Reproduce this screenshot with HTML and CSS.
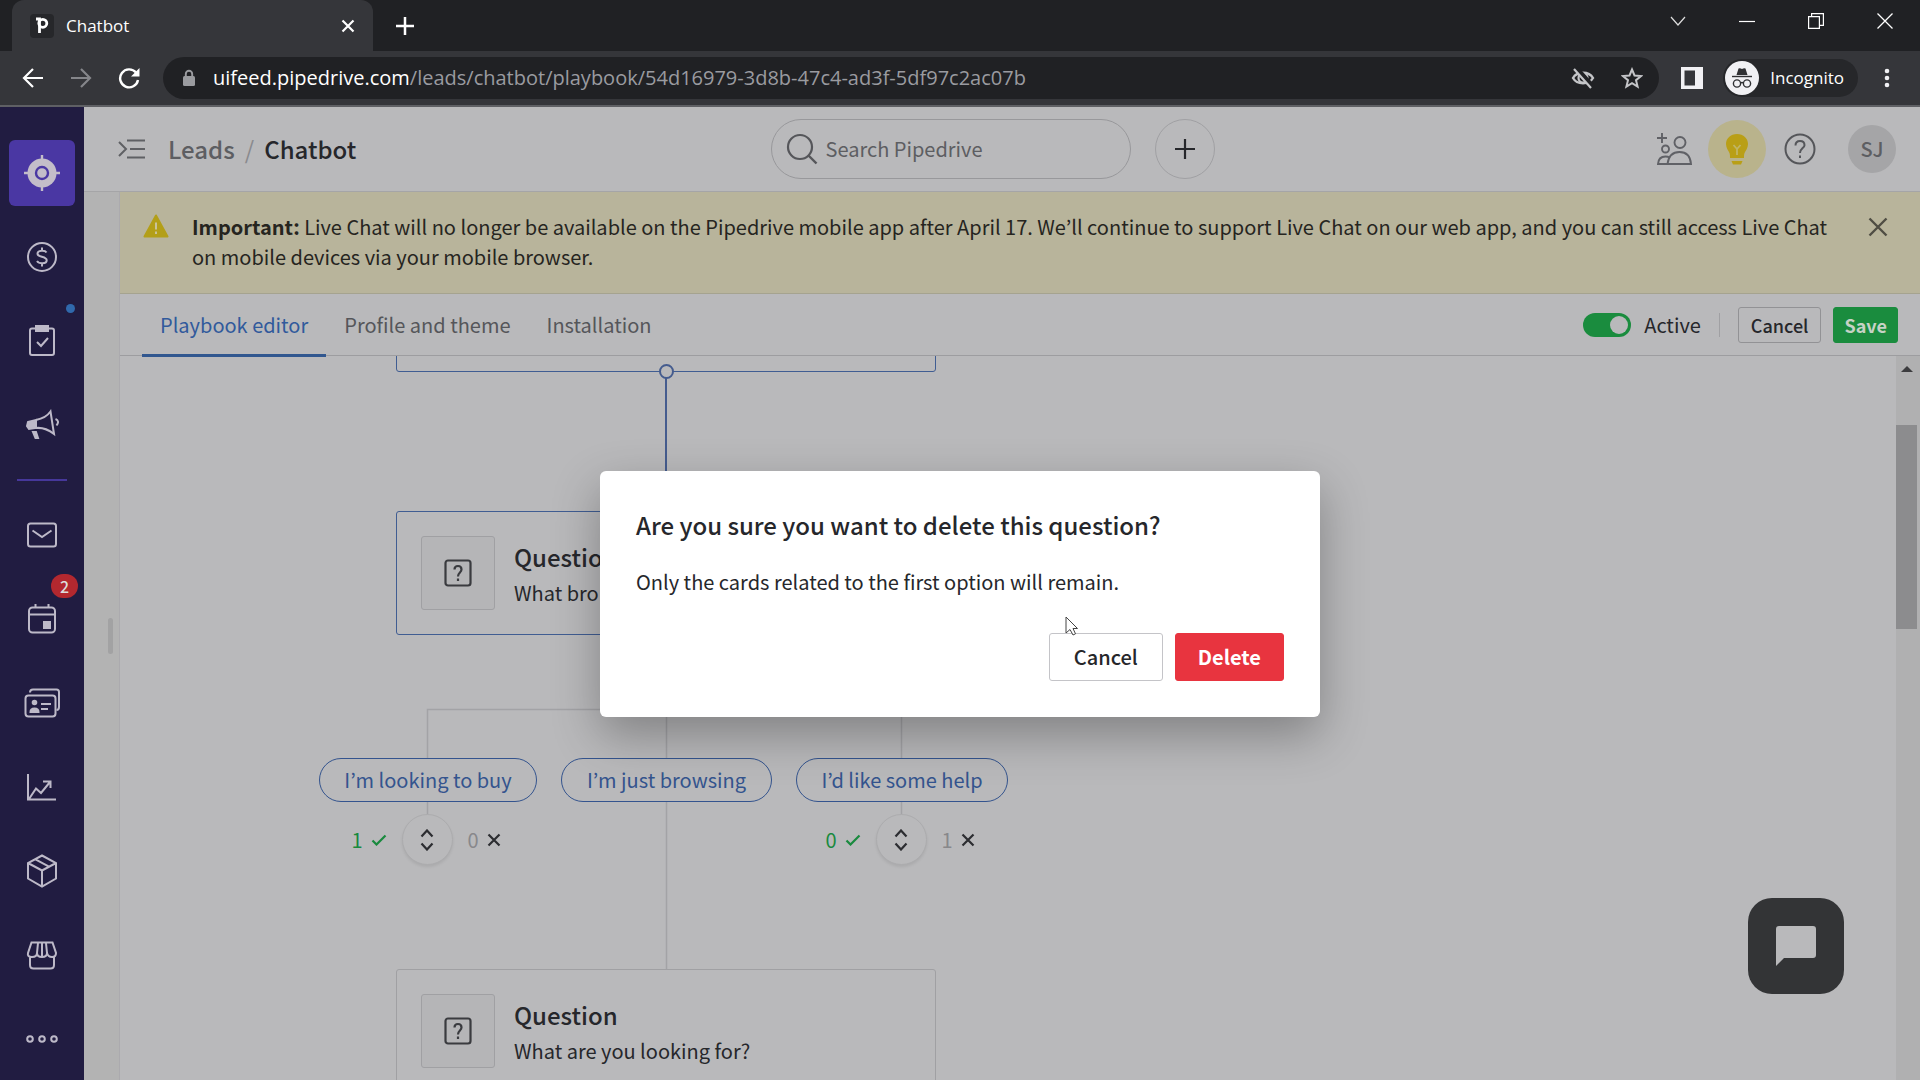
FILE: index.html
```html
<!DOCTYPE html>
<html lang="en">
<head>
<meta charset="utf-8">
<title>Chatbot</title>
<link rel="stylesheet" href="styles.css">
</head>
<body>
<header class="browser">
  <div class="tabstrip">
    <div class="browser-tab">
      <svg class="favicon" viewBox="0 0 24 24" width="24" height="24"><rect width="24" height="24" rx="4" fill="#26272a"/><path d="M6 5H9.500V19" fill="none" stroke="#fff" stroke-width="2.800"/><circle cx="12.800" cy="9.300" r="4" fill="none" stroke="#fff" stroke-width="2.800"/></svg>
      <span class="tab-title">Chatbot</span>
      <button class="bare" aria-label="Close tab"><svg viewBox="0 0 14 14" width="14" height="14"><path d="M1.500 1.500 12.500 12.500M12.500 1.500 1.500 12.500" stroke="#fff" stroke-width="2.200"/></svg></button>
    </div>
    <button class="bare new-tab" aria-label="New tab"><svg viewBox="0 0 18 18" width="18" height="18"><path d="M9 0V18M0 9H18" stroke="#fff" stroke-width="2.500"/></svg></button>
    <div class="window-controls">
      <button class="bare" aria-label="Search tabs"><svg viewBox="0 0 16 10" width="16" height="10"><path d="M1 1 8 9 15 1" fill="none" stroke="#ddd" stroke-width="1.200"/></svg></button>
      <button class="bare" aria-label="Minimise"><svg viewBox="0 0 16 16" width="16" height="16"><path d="M0 8.500H16" stroke="#fff" stroke-width="1.200"/></svg></button>
      <button class="bare" aria-label="Restore"><svg viewBox="0 0 16 16" width="16" height="16"><path d="M.600 3.600H11.400V15.400H.600ZM3.600 3.500V.600H15.400V12.400H11.500" fill="none" stroke="#fff" stroke-width="1.200"/></svg></button>
      <button class="bare" aria-label="Close"><svg viewBox="0 0 16 16" width="16" height="16"><path d="M.500.500 15.500 15.500M15.500.500.500 15.500" stroke="#fff" stroke-width="1.300"/></svg></button>
    </div>
  </div>
  <div class="toolbar">
    <button class="bare" aria-label="Back"><svg viewBox="0 0 22 22" width="22" height="22"><path d="M21 11H2M11 2 2 11 11 20" fill="none" stroke="#fff" stroke-width="2.200"/></svg></button>
    <button class="bare" aria-label="Forward"><svg viewBox="0 0 22 22" width="22" height="22"><path d="M1 11H20M11 2 20 11 11 20" fill="none" stroke="#85868a" stroke-width="2.200"/></svg></button>
    <button class="bare" aria-label="Reload"><svg viewBox="0 0 22 22" width="22" height="22"><path d="M18 5.500A9 9 0 1 0 20 13" fill="none" stroke="#fff" stroke-width="2.400"/><path d="M21.500 1V9.500H13Z" fill="#fff"/></svg></button>
    <div class="omnibox">
      <svg viewBox="0 0 14 18" width="14" height="18"><rect x="1" y="7" width="12" height="10" rx="1.500" fill="#9a9b9f"/><path d="M3.800 8V5A3.200 3.200 0 0 1 10.200 5V8" fill="none" stroke="#9a9b9f" stroke-width="1.900"/></svg>
      <div class="url"><span class="domain">uifeed.pipedrive.com</span>/leads/chatbot/playbook/54d16979-3d8b-47c4-ad3f-5df97c2ac07b</div>
      <button class="bare" aria-label="Third-party cookies blocked"><svg viewBox="0 0 24 22" width="24" height="22"><path d="M2 11C6 4 18 4 22 11 18 18 6 18 2 11Z" fill="none" stroke="#c4c5c8" stroke-width="2.400"/><circle cx="12" cy="11" r="4.500" fill="none" stroke="#c4c5c8" stroke-width="2.200"/><path d="M5 1 22 20" stroke="#202124" stroke-width="5"/><path d="M3 2 20 21" stroke="#c4c5c8" stroke-width="2.200"/></svg></button>
      <button class="bare" aria-label="Bookmark"><svg viewBox="0 0 22 22" width="22" height="22"><path d="M11 2.500 13.500 8.500 20 9 15 13.200 16.600 19.600 11 16.200 5.400 19.600 7 13.200 2 9 8.500 8.500Z" fill="none" stroke="#c4c5c8" stroke-width="2"/></svg></button>
    </div>
    <button class="bare side-panel" aria-label="Side panel"><svg viewBox="0 0 22 22" width="22" height="22"><path d="M0 0H22V22H0ZM3.500 3.500V18.500H14V3.500Z" fill="#f1f1f4" fill-rule="evenodd"/></svg></button>
    <button class="incognito"><svg viewBox="0 0 34 34" width="34" height="34"><circle cx="17" cy="17" r="17" fill="#f1f1f4"/><path d="M7 15.500H27" stroke="#303134" stroke-width="1.400"/><path d="M11.500 14 13.500 7.500Q15 6.800 17 8 19 6.800 20.500 7.500L22.500 14Z" fill="#303134"/><circle cx="12" cy="22.500" r="3.600" fill="none" stroke="#303134" stroke-width="1.400"/><circle cx="22" cy="22.500" r="3.600" fill="none" stroke="#303134" stroke-width="1.400"/><path d="M15.500 22Q17 21 18.500 22" fill="none" stroke="#303134" stroke-width="1.400"/></svg><span>Incognito</span></button>
    <button class="bare" aria-label="Browser menu"><svg viewBox="0 0 6 20" width="6" height="20"><circle cx="3" cy="3" r="2.300" fill="#f1f1f4"/><circle cx="3" cy="10" r="2.300" fill="#f1f1f4"/><circle cx="3" cy="17" r="2.300" fill="#f1f1f4"/></svg></button>
  </div>
</header>

<div class="app">
  <nav class="sidebar" aria-label="Main">
    <a class="nav-item active" href="#leads" aria-label="Leads"><svg viewBox="0 0 36 36" width="36" height="36"><circle cx="18" cy="18" r="14.500" fill="#c3bdc9"/><path d="M18 0V36M0 18H36" stroke="#c3bdc9" stroke-width="2.400"/><circle cx="18" cy="18" r="6" fill="#c3bdc9" stroke="#4a37a3" stroke-width="2.400"/></svg></a>
    <a class="nav-item" href="#deals" aria-label="Deals"><svg viewBox="0 0 32 32" width="32" height="32" class="line"><circle cx="16" cy="16" r="14"/><path d="M20.500 11.500C19 9 11.500 9 11.500 12.800 11.500 16.500 20.700 15 20.700 19.300 20.700 23.200 13 23.200 11 20M16 6.500V10M16 22V25.500"/></svg></a>
    <a class="nav-item" href="#projects" aria-label="Projects"><svg viewBox="0 0 32 32" width="32" height="32" class="line"><rect x="4" y="3.500" width="24" height="26.500" rx="2"/><path class="solid" d="M10 1H22V6H10Z"/><path d="M11 17 15 21 22 13"/></svg><span class="dot"></span></a>
    <a class="nav-item" href="#campaigns" aria-label="Campaigns"><svg viewBox="0 0 34 32" width="34" height="32" class="line"><path class="solid" d="M3 13 11 11V19L4 20 2 17Z"/><path d="M11 11Q21 9 25.500 2.500L29 25Q20 18 11 19M30.500 10Q35 12 31.500 16.500"/><path class="solid" d="M8 23H11L13 29H10.500Z"/></svg></a>
    <div class="nav-divider"></div>
    <a class="nav-item" href="#mail" aria-label="Mail"><svg viewBox="0 0 32 32" width="32" height="32" class="line"><rect x="2" y="4.500" width="28" height="23" rx="2.500"/><path d="M6.500 11.500 16 18 25.500 11.500"/></svg></a>
    <a class="nav-item" href="#activities" aria-label="Activities"><svg viewBox="0 0 32 32" width="32" height="32" class="line"><rect x="3" y="4.500" width="26" height="25" rx="3.500"/><path d="M3 11.500H29M9.500 1V4.500M22.500 1V4.500"/><path class="solid" d="M18 19H24V25H18Z"/></svg><span class="badge">2</span></a>
    <a class="nav-item" href="#contacts" aria-label="Contacts"><svg viewBox="0 0 38 32" width="38" height="32" class="line"><rect x="2.500" y="8.500" width="30" height="21" rx="3"/><path d="M7 5.500Q7 2.500 10 2.500H33.500Q36 2.500 36 5V20Q36 23 33.500 23M18 17H28M18 22H25"/><circle class="solid" cx="11.500" cy="15.500" r="1.800"/><path class="solid" d="M7.500 25Q7.500 21.500 11.500 21.500T15.500 25Z"/></svg></a>
    <a class="nav-item" href="#insights" aria-label="Insights"><svg viewBox="0 0 32 32" width="32" height="32" class="line"><path d="M2 3V28.500H30M3 28 10 17.500 15 22 24 11M17 10.500H24.500V17"/></svg></a>
    <a class="nav-item" href="#products" aria-label="Products"><svg viewBox="0 0 32 34" width="32" height="34" class="line"><path d="M16 1.500 30 9V24.500L16 32.500 2 24.500V9ZM2 9 16 16.500 30 9M16 16.500V32.500M9 5.200 23 12.700"/></svg></a>
    <a class="nav-item" href="#marketplace" aria-label="Marketplace"><svg viewBox="0 0 32 32" width="32" height="32" class="line"><path d="M5.500 3.500H26.500L30 14Q30 18 26 18T21 14Q21 18 16 18T11 14Q11 18 6 18T2 14ZM11 14 12 4M21 14 20 4M16 4V18M4 18V26Q4 29.500 7.500 29.500H24.500Q28 29.500 28 26V18"/></svg></a>
    <a class="nav-item" href="#more" aria-label="More"><svg viewBox="0 0 32 10" width="32" height="10" class="line"><circle cx="4" cy="5" r="2.800"/><circle cx="16" cy="5" r="2.800"/><circle cx="28" cy="5" r="2.800"/></svg></a>
  </nav>

  <div class="workspace">
    <div class="app-header">
      <div class="crumbs">
        <button class="bare" aria-label="Expand menu"><svg viewBox="0 0 28 20" width="28" height="20"><path d="M1 3 8 10 1 17M9 1.500H27M12 10H27M9 18.500H27" fill="none" stroke="#5f6064" stroke-width="2"/></svg></button>
        <a class="crumb" href="#leads">Leads</a><span class="slash">/</span><h1 class="crumb-current">Chatbot</h1>
      </div>
      <div class="search-group">
        <label class="search"><svg viewBox="0 0 32 32" width="32" height="32"><circle cx="14" cy="14" r="12" fill="none" stroke="#55565a" stroke-width="2.200"/><path d="M22.500 22.500 30.500 30.500" stroke="#55565a" stroke-width="2.400"/></svg><input type="text" placeholder="Search Pipedrive" aria-label="Search Pipedrive"></label>
        <button class="add" aria-label="Quick add"><svg viewBox="0 0 20 20" width="20" height="20"><path d="M10 0V20M0 10H20" stroke="#26272b" stroke-width="2.200"/></svg></button>
      </div>
      <div class="header-actions">
        <button class="bare" aria-label="Invite users"><svg viewBox="0 0 36 34" width="36" height="34" fill="none" stroke="#606166" stroke-width="1.900"><path d="M6 1V11M1 6H11"/><circle cx="24" cy="10.500" r="5.500"/><circle cx="9.500" cy="17" r="3.500"/><path d="M11.500 32H35Q34 20 23.500 20T11.500 32ZM11.500 32H2Q2.500 24.500 9.500 24.500 12 24.500 13.500 25.500"/></svg></button>
        <button class="tips" aria-label="Sales assistant"><svg viewBox="0 0 24 32" width="24" height="32"><path d="M12 1C5.500 1 1 5.500 1 11 1 15 3.500 18 4.500 20 5 21.500 5 23 5 25H19C19 23 19 21.500 19.500 20 20.500 18 23 15 23 11 23 5.500 18.500 1 12 1ZM6.500 28H17.500L16 31.500H8Z" fill="#b99f16"/><path d="M8.500 12 12 16 15.500 12M12 16V22" fill="none" stroke="#c0b565" stroke-width="1.800"/></svg></button>
        <button class="bare" aria-label="Help"><svg viewBox="0 0 32 32" width="32" height="32" fill="none" stroke="#55565a" stroke-width="2"><circle cx="16" cy="16" r="14.500"/><path d="M11.500 12.500Q11.500 8 16 8T20.500 12.200C20.500 15 16 15.500 16 20M16 22.500V25"/></svg></button>
        <button class="avatar">SJ</button>
      </div>
    </div>

    <div class="panel-row">
      <div class="gutter"><span class="grip"></span></div>
      <main class="panel">
        <div class="notice">
          <svg viewBox="0 0 26 24" width="26" height="24"><path d="M13 1.500 24.500 22.500H1.500Z" fill="#b39f18" stroke="#b39f18" stroke-width="2" stroke-linejoin="round"/><path d="M13 8.500V15.500M13 17.500V20" stroke="#c9c29a" stroke-width="2"/></svg>
          <p><strong>Important:</strong> Live Chat will no longer be available on the Pipedrive mobile app after April 17. We’ll continue to support Live Chat on our web app, and you can still access Live Chat on mobile devices via your mobile browser.</p>
          <button class="bare" aria-label="Dismiss"><svg viewBox="0 0 20 20" width="20" height="20"><path d="M1.500 1.500 18.500 18.500M18.500 1.500 1.500 18.500" stroke="#4f4d43" stroke-width="2.400"/></svg></button>
        </div>
        <div class="editor-bar">
          <div class="tabs">
            <a class="tab selected" href="#editor">Playbook editor</a>
            <a class="tab" href="#profile">Profile and theme</a>
            <a class="tab" href="#install">Installation</a>
          </div>
          <div class="editor-actions">
            <label class="toggle"><input type="checkbox" checked><span>Active</span></label>
            <span class="rule"></span>
            <button class="btn small">Cancel</button>
            <button class="btn small save">Save</button>
          </div>
        </div>
        <div class="canvas-row">
          <div class="canvas">
            <svg class="wires" viewBox="0 0 900 723" width="900" height="723" fill="none"><path d="M546 15V155" stroke="#455c8e" stroke-width="2"/><path d="M546.500 279V613M307.500 402V353.500H781.500V402M307.500 446V461M781.500 446V461" stroke="#a3a3a6" stroke-width="1.500"/></svg>
            <div class="node node-start"></div>
            <span class="port"></span>
            <article class="node node-first"><div class="node-icon"><svg viewBox="0 0 28 28" width="28" height="28" fill="none" stroke="#3a3b3f" stroke-width="2.200"><rect x="1.500" y="1.500" width="25" height="25" rx="2.500"/><path d="M10.500 10.500Q10.500 7 14 7T17.500 10.500C17.500 13.500 14 13.500 14 17.500M14 19.500V22"/></svg></div><div><h2>Question</h2><p>What bro</p></div></article>
            <button class="option option-buy">I’m looking to buy</button>
            <button class="option option-browse">I’m just browsing</button>
            <button class="option option-help">I’d like some help</button>
            <div class="score score-buy"><span class="yes">1 <svg viewBox="0 0 16 12" width="16" height="12"><path d="M1.500 6.500 5.500 10.500 14.500 1.500" fill="none" stroke="#198a3e" stroke-width="2.200"/></svg></span><button class="sorter" aria-label="Expand"><svg viewBox="0 0 14 22" width="14" height="22"><path d="M1.500 7.500 7 1.500 12.500 7.500M1.500 14.500 7 20.500 12.500 14.500" fill="none" stroke="#2c2d31" stroke-width="2.200"/></svg></button><span class="no">0 <svg viewBox="0 0 14 14" width="14" height="14"><path d="M1.500 1.500 12.500 12.500M12.500 1.500 1.500 12.500" stroke="#2c2d31" stroke-width="2.200"/></svg></span></div>
            <div class="score score-help"><span class="yes">0 <svg viewBox="0 0 16 12" width="16" height="12"><path d="M1.500 6.500 5.500 10.500 14.500 1.500" fill="none" stroke="#198a3e" stroke-width="2.200"/></svg></span><button class="sorter" aria-label="Expand"><svg viewBox="0 0 14 22" width="14" height="22"><path d="M1.500 7.500 7 1.500 12.500 7.500M1.500 14.500 7 20.500 12.500 14.500" fill="none" stroke="#2c2d31" stroke-width="2.200"/></svg></button><span class="no">1 <svg viewBox="0 0 14 14" width="14" height="14"><path d="M1.500 1.500 12.500 12.500M12.500 1.500 1.500 12.500" stroke="#2c2d31" stroke-width="2.200"/></svg></span></div>
            <article class="node node-second"><div class="node-icon"><svg viewBox="0 0 28 28" width="28" height="28" fill="none" stroke="#3a3b3f" stroke-width="2.200"><rect x="1.500" y="1.500" width="25" height="25" rx="2.500"/><path d="M10.500 10.500Q10.500 7 14 7T17.500 10.500C17.500 13.500 14 13.500 14 17.500M14 19.500V22"/></svg></div><div><h2>Question</h2><p>What are you looking for?</p></div></article>
            <button class="chat" aria-label="Open chat"><svg viewBox="0 0 40 40" width="40" height="40"><path d="M3 0H37Q40 0 40 3V29Q40 32 37 32H8L0 40V3Q0 0 3 0Z" fill="#b9b9bb"/></svg></button>
          </div>
          <div class="scrollbar"><svg viewBox="0 0 12 6" width="12" height="6"><path d="M0 6 6 0 12 6Z" fill="#3c3c3f"/></svg><span class="thumb"></span></div>
        </div>
      </main>
    </div>
  </div>

  <div class="overlay">
    <section class="dialog" role="dialog" aria-labelledby="dialog-title">
      <h2 id="dialog-title">Are you sure you want to delete this question?</h2>
      <p>Only the cards related to the first option will remain.</p>
      <div class="dialog-actions">
        <button class="btn large">Cancel</button>
        <button class="btn large delete">Delete</button>
        <svg class="cursor" viewBox="0 0 14 20" width="14" height="20"><path d="M1 1V17L5 13.500 8 19 10.500 17.800 8 12.500H12.500Z" fill="#fff" stroke="#444" stroke-width="1"/></svg>
      </div>
    </section>
  </div>
</div>
</body>
</html>
```
FILE: styles.css
```css
* { box-sizing: border-box; }

body {
  margin: 0;
  height: 100vh;
  display: flex;
  flex-direction: column;
  overflow: hidden;
  background: #b9b9bb;
  color: #26272b;
  font: 20px/30px "Noto Sans CJK KR", "Noto Sans", sans-serif;
}

h1, h2, p { margin: 0; }
a { color: inherit; text-decoration: none; }
svg { display: block; flex: none; }
button { font: inherit; color: inherit; cursor: pointer; }
.bare { padding: 0; border: 0; background: none; flex: none; }

/* browser frame */
.browser {
  flex: none;
  color: #fff;
  background: #35363a;
  border-bottom: 2px solid #5f6064;
  font-family: "Open Sans", "Noto Sans", sans-serif;
}
.tabstrip {
  display: flex;
  align-items: flex-start;
  height: 51px;
  padding-left: 12px;
  background: #202124;
}
.browser-tab {
  display: flex;
  align-items: center;
  gap: 12px;
  width: 361px;
  height: 51px;
  padding: 0 18px;
  border-radius: 12px 12px 0 0;
  background: #35363a;
  font-size: 17px;
}
.tab-title { flex: 1; }
.new-tab { margin: 17px 0 0 23px; }
.window-controls {
  display: flex;
  align-items: center;
  gap: 53px;
  height: 42px;
  margin-left: auto;
  padding-right: 27px;
}
.toolbar {
  display: flex;
  align-items: center;
  gap: 26px;
  height: 54px;
  padding: 0 30px 0 22px;
}
.omnibox {
  flex: 1;
  display: flex;
  align-items: center;
  gap: 26px;
  min-width: 0;
  height: 42px;
  margin: 0 -4px 0 -3px;
  padding: 0 16px 0 19px;
  border-radius: 21px;
  background: #202124;
}
.url {
  flex: 1;
  margin-left: -9px;
  color: #9a9ba0;
  font-size: 20px;
  white-space: nowrap;
}
.domain { color: #fff; }
.side-panel { margin-right: -6px; }
.incognito {
  display: flex;
  align-items: center;
  gap: 11px;
  height: 38px;
  padding: 0 14px 0 2px;
  border: 0;
  border-radius: 19px;
  background: #26272a;
  font-size: 17px;
}

/* application shell */
.app {
  position: relative;
  flex: 1;
  display: flex;
  min-height: 0;
}
.sidebar {
  flex: none;
  display: flex;
  flex-direction: column;
  align-items: center;
  gap: 18px;
  width: 84px;
  padding-top: 33px;
  background: #211c41;
}
.nav-item {
  position: relative;
  flex: none;
  display: grid;
  place-items: center;
  width: 66px;
  height: 66px;
  border-radius: 6px;
}
.nav-item.active { background: #4a37a3; }
.nav-divider { width: 50px; height: 2px; margin: 3px 0; background: #46379a; }
.line { fill: none; stroke: #bdb9c8; stroke-width: 2; }
.line .solid { fill: #bdb9c8; }
.dot {
  position: absolute;
  top: -4px;
  right: 0;
  width: 9px;
  height: 9px;
  border-radius: 50%;
  background: #3069ac;
}
.badge {
  position: absolute;
  top: -12px;
  right: -3px;
  width: 27px;
  height: 24px;
  border-radius: 12px;
  background: #b3282f;
  color: #ddd;
  font-size: 16px;
  font-weight: 500;
  line-height: 24px;
  text-align: center;
}
.workspace {
  flex: 1;
  display: flex;
  flex-direction: column;
  min-width: 0;
}

/* top header */
.app-header {
  flex: none;
  display: grid;
  grid-template-columns: 1fr auto 1fr;
  align-items: center;
  height: 85px;
  padding: 0 24px 0 34px;
  border-bottom: 1px solid #a5a5a7;
}
.crumbs { display: flex; align-items: center; font-size: 24px; }
.crumb { margin-left: 22px; color: #5d5e62; font-weight: 500; }
.slash { margin: 0 10px; color: #8a8a8e; }
.crumb-current { font-size: 24px; font-weight: 500; }
.search-group { display: flex; gap: 24px; margin-right: 29px; }
.search {
  display: flex;
  align-items: center;
  gap: 8px;
  width: 360px;
  height: 60px;
  padding: 0 14px;
  border: 1px solid #98989b;
  border-radius: 30px;
}
.search input {
  flex: 1;
  min-width: 0;
  padding: 0;
  border: 0;
  background: none;
  font: inherit;
}
.search input::placeholder { color: #5d5e62; opacity: 1; }
.add {
  display: grid;
  place-items: center;
  width: 60px;
  height: 60px;
  border: 1px solid #a0a0a3;
  border-radius: 50%;
  background: none;
}
.header-actions { display: flex; align-items: center; justify-content: flex-end; }
.tips {
  display: grid;
  place-items: center;
  width: 58px;
  height: 58px;
  margin: 0 18px 0 16px;
  padding: 0;
  border: 0;
  border-radius: 50%;
  background: #b9b38c;
}
.avatar {
  width: 48px;
  height: 48px;
  margin-left: 32px;
  padding: 0;
  border: 0;
  border-radius: 50%;
  background: #a5a5a7;
  color: #5d5e62;
  font-weight: 500;
}

/* main panel */
.panel-row { flex: 1; display: flex; min-height: 0; }
.gutter {
  flex: none;
  display: flex;
  justify-content: flex-end;
  align-items: center;
  width: 36px;
  padding-right: 6px;
  background: #b3b3b3;
  border-right: 1px solid #abaaae;
}
.grip { width: 5px; height: 36px; border-radius: 3px; background: #a2a2a3; }
.panel { flex: 1; display: flex; flex-direction: column; min-width: 0; }
.notice {
  flex: none;
  display: flex;
  align-items: flex-start;
  gap: 23px;
  padding: 20px 32px 21px 23px;
  border-bottom: 1px solid #a5a38f;
  background: #b8b49b;
  color: #26251f;
}
.notice svg { margin-top: 2px; }
.notice p { flex: 1; }
.notice strong { font-weight: 700; }
.notice .bare { margin-top: 3px; }
.editor-bar {
  flex: none;
  display: flex;
  justify-content: space-between;
  height: 62px;
  padding: 0 22px;
  border-bottom: 1px solid #9d9da0;
}
.tabs { display: flex; }
.tab {
  height: 63px;
  padding: 16px 18px 0;
  border-bottom: 3px solid transparent;
  color: #55565a;
}
.tab.selected { border-color: #31578f; color: #315a9c; }
.editor-actions { display: flex; align-items: center; gap: 12px; }
.toggle { display: flex; align-items: center; gap: 13px; }
.toggle input {
  appearance: none;
  display: flex;
  justify-content: flex-end;
  width: 48px;
  height: 24px;
  margin: 0;
  padding: 3px;
  border-radius: 12px;
  background: #1a8c3e;
}
.toggle input::before {
  content: "";
  width: 18px;
  height: 18px;
  border-radius: 50%;
  background: #b9b9bb;
}
.rule { width: 1px; height: 24px; margin: 0 6px; background: #a0a0a3; }
.btn {
  border: 1px solid #929295;
  border-radius: 3px;
  background: none;
  font-weight: 500;
  white-space: nowrap;
}
.btn.small { height: 36px; padding: 0 12px; font-size: 18px; line-height: 30px; }
.btn.save { padding: 0 10px; border-color: #1a8c3e; background: #1a8c3e; color: #c6d2c6; font-weight: 700; }

/* playbook canvas */
.canvas-row { flex: 1; display: flex; min-height: 0; }
.canvas { position: relative; flex: 1; min-width: 0; overflow: hidden; }
.wires { position: absolute; top: 0; left: 0; }
.node {
  position: absolute;
  left: 276px;
  display: flex;
  gap: 19px;
  width: 540px;
  height: 124px;
  padding: 24px;
  border: 1px solid #405d92;
  border-radius: 3px;
  background: #b9b9bb;
}
.node-start { top: -108px; }
.node-first { top: 155px; }
.node-second { top: 613px; border-color: #a0a0a3; }
.node h2 { margin-top: 6px; font-size: 24px; font-weight: 500; }
.node p { margin-top: 6px; }
.node-icon {
  flex: none;
  display: grid;
  place-items: center;
  width: 74px;
  height: 74px;
  border: 1px solid #a0a0a3;
  border-radius: 3px;
  background: #b5b5b7;
}
.port {
  position: absolute;
  top: 8px;
  left: 539px;
  width: 15px;
  height: 15px;
  border: 2px solid #455c8e;
  border-radius: 50%;
  background: #b9b9bb;
}
.option {
  position: absolute;
  top: 402px;
  height: 44px;
  padding: 0;
  border: 1px solid #34548e;
  border-radius: 22px;
  background: #b9b9bb;
  color: #34548e;
}
.option-buy { left: 199px; width: 218px; }
.option-browse { left: 441px; width: 211px; }
.option-help { left: 676px; width: 212px; }
.score {
  position: absolute;
  top: 458px;
  display: flex;
  align-items: center;
  justify-content: center;
  gap: 15px;
  width: 160px;
}
.score-buy { left: 226px; }
.score-help { left: 700px; }
.yes, .no { display: flex; align-items: center; gap: 8px; }
.yes { color: #198a3e; }
.no { color: #88888b; }
.sorter {
  display: grid;
  place-items: center;
  width: 51px;
  height: 51px;
  padding: 0;
  border: 1px solid #acacae;
  border-radius: 50%;
  background: #b9b9bb;
  box-shadow: 0 2px 3px rgba(0, 0, 0, .08);
}
.chat {
  position: absolute;
  right: 52px;
  bottom: 86px;
  display: grid;
  place-items: center;
  width: 96px;
  height: 96px;
  border: 0;
  border-radius: 24px;
  background: #333436;
}
.scrollbar {
  flex: none;
  display: flex;
  flex-direction: column;
  align-items: center;
  gap: 53px;
  width: 24px;
  padding: 10px 3px 0 0;
  background: #b0b0b1;
}
.thumb { width: 21px; height: 204px; background: #8c8c8e; }

/* confirmation */
.overlay { position: absolute; inset: 0; display: grid; place-items: center; }
.dialog {
  width: 720px;
  padding: 36px;
  border-radius: 6px;
  background: #fff;
  box-shadow: 0 18px 48px rgba(0, 0, 0, .3);
}
.dialog h2 { font-size: 24px; font-weight: 500; line-height: 36px; }
.dialog p { margin: 24px 0 36px; }
.dialog-actions { position: relative; display: flex; justify-content: flex-end; gap: 12px; }
.btn.large { height: 48px; padding: 0 24px; border-color: #c4c4c8; }
.btn.delete { padding: 0 22px; border-color: #e8343f; background: #e8343f; color: #fff; font-weight: 700; }
.cursor { position: absolute; top: -17px; right: 205px; }
```
